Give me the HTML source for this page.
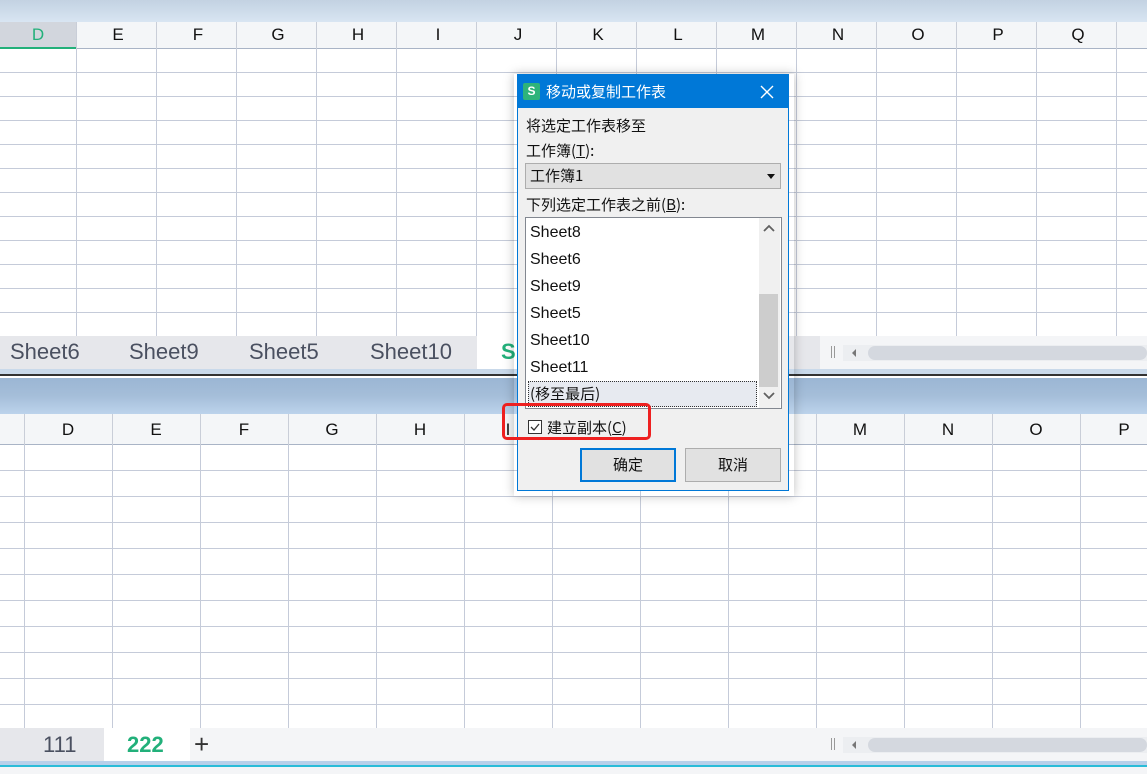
<!DOCTYPE html>
<html><head><meta charset="utf-8"><style>
*{margin:0;padding:0;box-sizing:border-box}
body{width:1147px;height:774px;position:relative;overflow:hidden;background:#fff;font-family:"Liberation Sans","Noto Sans CJK SC",sans-serif}
.a{position:absolute}
.hd{font-size:17px;color:#111;text-align:center}
.cj{font-family:"Noto Sans CJK SC","Liberation Sans",sans-serif}
.tab{font-size:22px;color:#4a5060;top:339px}
</style></head><body>
<!-- top window -->
<div class="a" style="left:0;top:0;width:1147px;height:22px;background:linear-gradient(#c3d2e2,#d8e5f2)"></div>
<div class="a" style="left:0;top:22px;width:1147px;height:27px;background:#f4f6f8;border-bottom:1px solid #a9b4c6"></div>
<div class="a" style="left:0;top:22px;width:76px;height:27px;background:#d2d6dd;border-bottom:2px solid #22b07a"></div>
<div id="h1"></div>
<div class="a" style="left:0;top:49px;width:1147px;height:287px;background:
repeating-linear-gradient(90deg,transparent 0 76px,#c5cbd9 76px 77px,transparent 77px 80px),
repeating-linear-gradient(180deg,transparent 0 23px,#c5cbd9 23px 24px);background-size:80px 100%,100% 24px"></div>
<div class="a" style="left:0;top:336px;width:1147px;height:33px;background:#e6e7eb"></div>
<div class="a" style="left:477px;top:336px;width:42px;height:33px;background:#fff"></div>
<div class="a" style="left:820px;top:336px;width:327px;height:33px;background:#f4f5f7"></div>
<div class="a" style="left:843px;top:345px;width:304px;height:16px;background:#eceef1"></div>
<div class="a" style="left:868px;top:346px;width:279px;height:14px;border-radius:7px;background:#d4d8df"></div>
<div class="a" style="left:831px;top:346px;width:1px;height:12px;background:#999"></div>
<div class="a" style="left:834px;top:346px;width:1px;height:12px;background:#999"></div>
<div class="a" style="left:852px;top:349px;border:4px solid transparent;border-right:4px solid #777;border-left:0"></div>
<div class="a tab" style="left:10px">Sheet6</div>
<div class="a tab" style="left:129px">Sheet9</div>
<div class="a tab" style="left:249px">Sheet5</div>
<div class="a tab" style="left:370px">Sheet10</div>
<div class="a tab" style="left:501px;color:#22b07a;font-weight:bold">Sh</div>
<div class="a" style="left:0;top:369px;width:1147px;height:5px;background:#c9d9ea"></div>
<div class="a" style="left:0;top:374px;width:1147px;height:2px;background:#333"></div>
<div class="a" style="left:0;top:376px;width:1147px;height:2px;background:#fff"></div>
<div class="a" style="left:0;top:378px;width:1147px;height:36px;background:linear-gradient(#9bb6d4 0%,#a5bed9 50%,#bcd3eb 100%)"></div>
<!-- bottom window -->
<div class="a" style="left:0;top:414px;width:1147px;height:31px;background:#f4f6f8;border-bottom:1px solid #a9b4c6"></div>
<div id="h2"></div>
<div class="a" style="left:0;top:445px;width:1147px;height:283px;background:
repeating-linear-gradient(90deg,transparent 0 24px,#c5cbd9 24px 25px,transparent 25px 88px),
repeating-linear-gradient(180deg,transparent 0 25px,#c5cbd9 25px 26px);background-size:88px 100%,100% 26px"></div>
<div class="a" style="left:0;top:728px;width:1147px;height:34px;background:#f4f5f7"></div>
<div class="a" style="left:0;top:728px;width:104px;height:33px;background:#e6e7eb"></div>
<div class="a" style="left:104px;top:728px;width:86px;height:33px;background:#fff"></div>
<div class="a" style="top:732px;left:43px;font-size:22px;color:#4a5060">111</div>
<div class="a" style="top:732px;left:127px;font-size:22px;color:#22b07a;font-weight:bold">222</div>
<div class="a" style="top:729px;left:194px;font-size:26px;color:#333;font-weight:300">+</div>
<div class="a" style="left:843px;top:737px;width:304px;height:16px;background:#eceef1"></div>
<div class="a" style="left:868px;top:738px;width:279px;height:14px;border-radius:7px;background:#d4d8df"></div>
<div class="a" style="left:831px;top:738px;width:1px;height:12px;background:#999"></div>
<div class="a" style="left:834px;top:738px;width:1px;height:12px;background:#999"></div>
<div class="a" style="left:852px;top:741px;border:4px solid transparent;border-right:4px solid #777;border-left:0"></div>
<div class="a" style="left:0;top:761px;width:1147px;height:4px;background:#b8d0ea"></div>
<div class="a" style="left:0;top:765px;width:1147px;height:2px;background:#2bbcd8"></div>
<div class="a" style="left:0;top:767px;width:1147px;height:7px;background:#f4f5f7"></div>
<script>
var L="DEFGHIJKLMNOPQ",s="",t="";
for(var i=0;i<14;i++){s+='<div class="a hd" style="left:'+(i*80-2)+'px;top:25px;width:80px;'+(i==0?'color:#22b07a':'')+'">'+L[i]+'</div><div class="a" style="left:'+(i*80+76)+'px;top:22px;width:1px;height:27px;background:#c9ced8"></div>';}
for(var i=0;i<13;i++){t+='<div class="a hd" style="left:'+(24+i*88)+'px;top:420px;width:88px">'+L[i]+'</div><div class="a" style="left:'+(24+i*88)+'px;top:414px;width:1px;height:31px;background:#c9ced8"></div>';}
document.getElementById('h1').innerHTML=s;
document.getElementById('h2').innerHTML=t;
</script>
<!-- dialog -->
<div class="a" style="left:514px;top:74px;width:280px;height:422px;box-shadow:0 0 10px rgba(0,0,0,.25)"></div>
<div class="a cj" style="left:517px;top:74px;width:272px;height:417px;background:#f0f0f0;border:1px solid #0078d7;font-size:15px;color:#111">
 <div class="a" style="left:0;top:0;width:270px;height:33px;background:#0078d7"></div>
 <div class="a" style="left:5px;top:8px;width:17px;height:17px;background:#2eb37a;border-radius:2px;color:#fff;font:bold 12px 'Liberation Sans';text-align:center;line-height:17px">S</div>
 <div class="a" style="left:28px;top:6px;color:#fff;font-size:15px">移动或复制工作表</div>
 <svg class="a" style="left:242px;top:10px" width="14" height="14"><path d="M1 1L13 13M13 1L1 13" stroke="#fff" stroke-width="1.4"/></svg>
 <div class="a" style="left:8px;top:40px">将选定工作表移至</div>
 <div class="a" style="left:8px;top:65px">工作簿(<u>T</u>):</div>
 <div class="a" style="left:7px;top:88px;width:256px;height:26px;background:#e1e1e1;border:1px solid #adadad"></div>
 <div class="a" style="left:12px;top:90px">工作簿1</div>
 <div class="a" style="left:249px;top:99px;border:4px solid transparent;border-top:5px solid #111;border-bottom:0"></div>
 <div class="a" style="left:8px;top:119px">下列选定工作表之前(<u>B</u>):</div>
 <div class="a" style="left:7px;top:142px;width:257px;height:192px;background:#fff;border:1px solid #828790"></div>
 <div class="a" style="left:241px;top:143px;width:21px;height:190px;background:#f0f0f0"></div>
 <div class="a" style="left:241px;top:219px;width:19px;height:93px;background:#cdcdcd"></div>
 <svg class="a" style="left:245px;top:148px" width="12" height="10"><path d="M1 8L6 3L11 8" stroke="#606060" stroke-width="1.8" fill="none"/></svg>
 <svg class="a" style="left:245px;top:316px" width="12" height="10"><path d="M1 2L6 7L11 2" stroke="#606060" stroke-width="1.8" fill="none"/></svg>
 <div class="a" style="left:12px;top:144px;line-height:27px;font-size:16px;font-family:'Liberation Sans',sans-serif">Sheet8<br>Sheet6<br>Sheet9<br>Sheet5<br>Sheet10<br>Sheet11</div>
 <div class="a" style="left:10px;top:306px;width:229px;height:26px;background:#e7eaf0;border:1px dotted #333"></div>
 <div class="a" style="left:12px;top:308px">(移至最后)</div>
 <div class="a" style="left:10px;top:345px;width:14px;height:14px;background:#fff;border:1px solid #333"></div>
 <svg class="a" style="left:11px;top:346px" width="12" height="12"><path d="M2 6L5 9L10 3" stroke="#333" stroke-width="1.3" fill="none"/></svg>
 <div class="a" style="left:29px;top:342px">建立副本(<u>C</u>)</div>
 <div class="a" style="left:62px;top:373px;width:96px;height:34px;background:#e1e1e1;border:2px solid #0078d7;text-align:center;line-height:30px">确定</div>
 <div class="a" style="left:167px;top:373px;width:96px;height:34px;background:#e1e1e1;border:1px solid #adadad;text-align:center;line-height:32px">取消</div>
</div>
<div class="a" style="left:502px;top:403px;width:149px;height:37px;border:3px solid #ee2020;border-radius:5px"></div>
</body></html>
